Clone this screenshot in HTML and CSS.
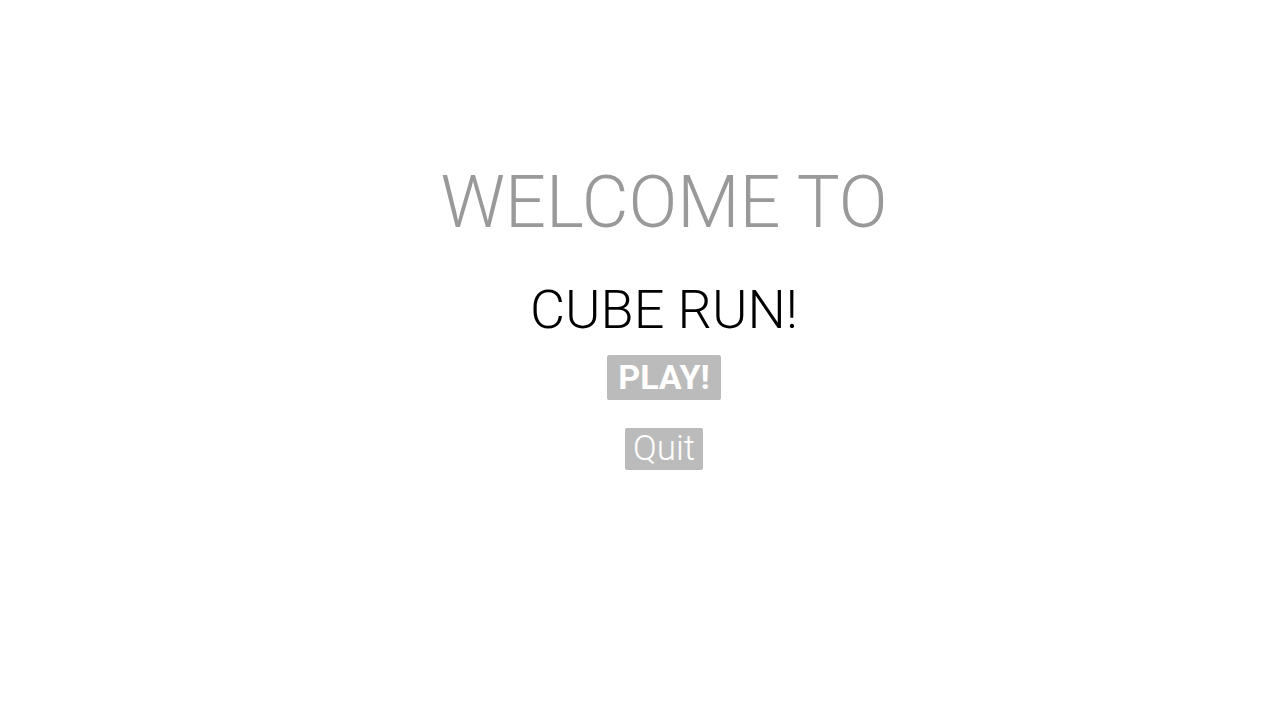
FILE: index.html
```html
<!DOCTYPE html>
<html>
<head>
<meta charset="utf-8">
<link rel="stylesheet" href="styles.css">
</head>
<body>
<main class="menu">
  <h1 class="welcome">WELCOME TO</h1>
  <h2 class="title">CUBE RUN!</h2>
  <button class="btn btn-play">PLAY!</button>
  <button class="btn btn-quit">Quit</button>
</main>
</body>
</html>
```
FILE: styles.css
```css
html, body {
  margin: 0;
  padding: 0;
  background: #fff;
}
.menu {
  display: flex;
  flex-direction: column;
  align-items: center;
  padding-left: 48px;
  padding-top: 163px;
  font-family: Roboto, "Liberation Sans", sans-serif;
}
.welcome {
  margin: 0;
  font-size: 72px;
  font-weight: 300;
  color: #999;
  line-height: 80px;
}
.title {
  margin: 35px 0 0 0;
  font-size: 54px;
  font-weight: 300;
  color: #000;
  line-height: 64px;
}
.btn {
  border: none;
  background: #bbbbbb;
  color: #fff;
  font-family: Roboto, "Liberation Sans", sans-serif;
  border-radius: 2px;
  padding: 0 10px;
}
.btn-play {
  margin-top: 13px;
  font-size: 34px;
  font-weight: 700;
  height: 45px;
  line-height: 45px;
  padding: 0 11px;
}
.btn-quit {
  margin-top: 28px;
  font-size: 35px;
  font-weight: 300;
  height: 42px;
  line-height: 42px;
  padding: 0 8px;
}
```
